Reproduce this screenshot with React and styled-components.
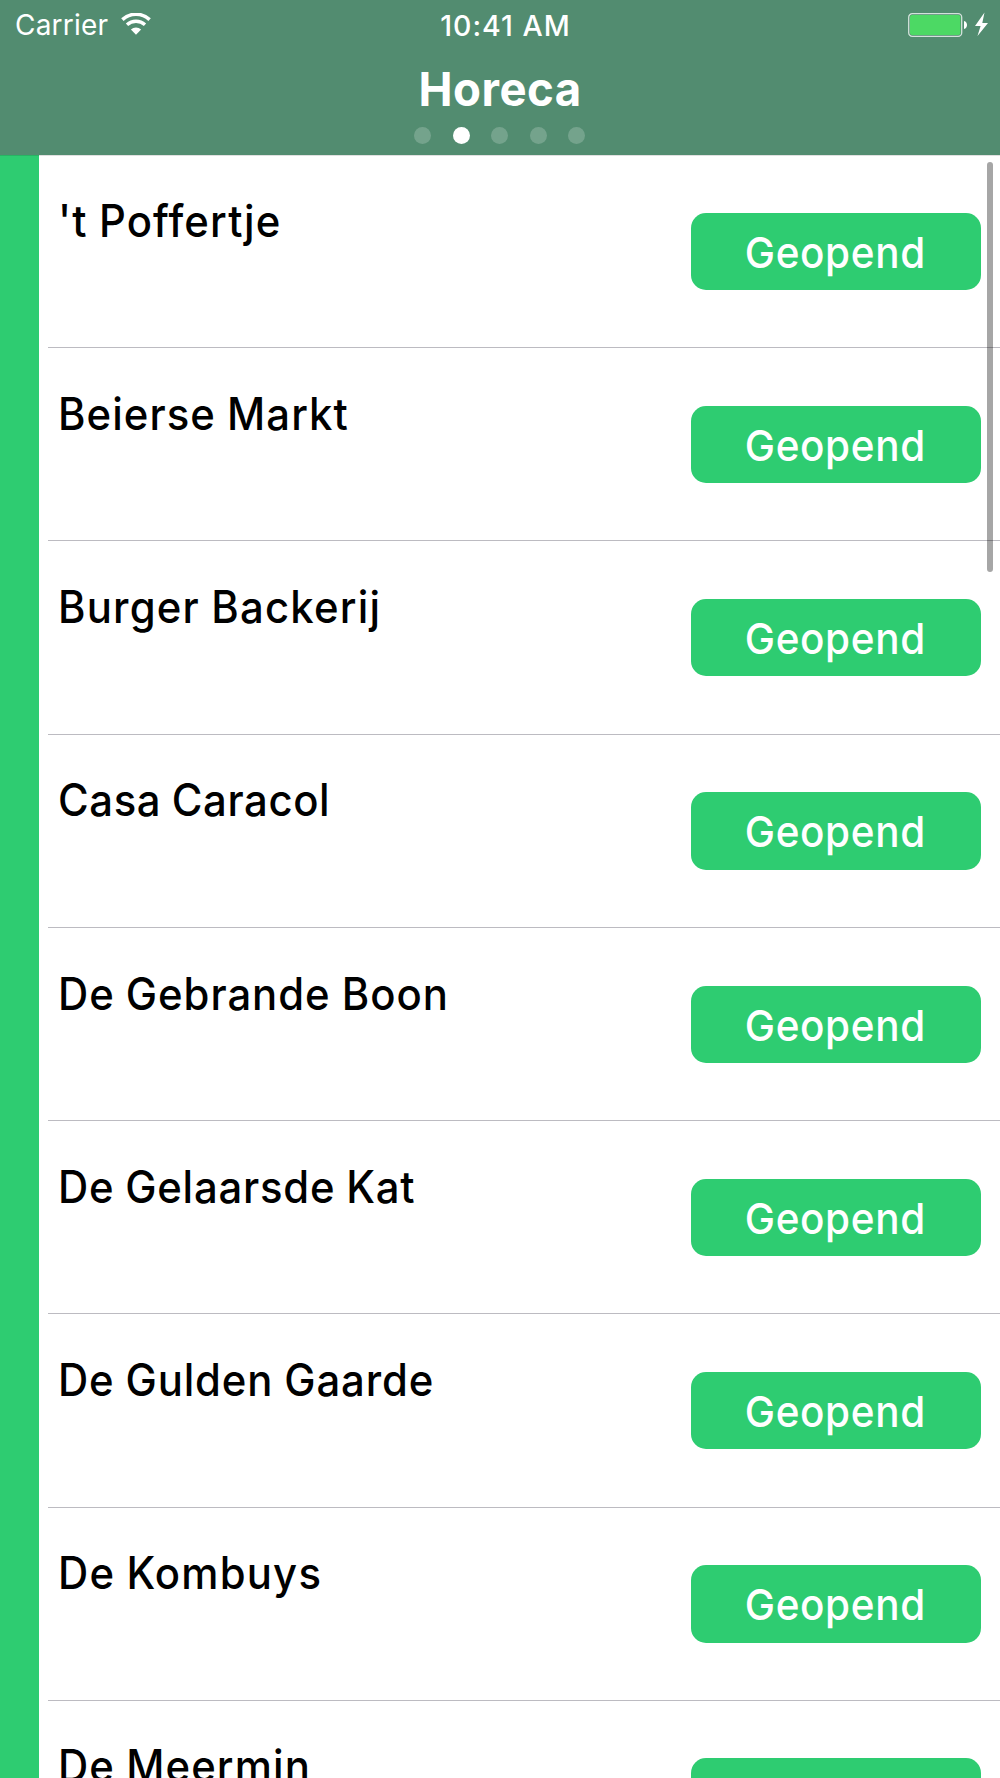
import React from 'react'
import styled, { createGlobalStyle } from 'styled-components'

const GlobalStyle = createGlobalStyle`
  body {
    margin: 0;
    background: #fff;
    font-family: Inter, "Liberation Sans", sans-serif;
    -webkit-font-smoothing: antialiased;
  }
`

const Screen = styled.div`
  position: relative;
  display: flex;
  flex-direction: column;
  height: 1778px;
  overflow: hidden;
`

const Header = styled.header`
  position: relative;
  flex: none;
  height: 155px;
  background: #528c70;
  box-shadow: 0 1px 0 rgba(0, 0, 0, .12);
  color: #fff;
  display: flex;
  flex-direction: column;
  align-items: center;
`

const StatusBar = styled.div`
  box-sizing: border-box;
  width: 100%;
  height: 48px;
  padding: 3px 12px 0 15px;
  display: grid;
  grid-template-columns: 1fr auto 1fr;
  align-items: center;
  font-size: 28px;
  line-height: 45px;
`

const Carrier = styled.div`
  display: flex;
  align-items: center;
  gap: 13px;
  letter-spacing: .2px;

  svg {
    margin-bottom: 3px;
  }
`

const Clock = styled.div`
  font-size: 28.5px;
  font-weight: 500;
  line-height: 44px;
  letter-spacing: 1px;
  padding-left: 8px;
`

const Power = styled.div`
  display: flex;
  justify-content: flex-end;

  svg {
    margin-bottom: 2px;
  }
`

const Title = styled.h1`
  margin: 16px 0 0;
  font-size: 47px;
  font-weight: 700;
  line-height: 50px;
  letter-spacing: .5px;
  transform: scaleX(.97);
`

const Dots = styled.div`
  display: flex;
  gap: 21.6px;
  margin: 13.2px .6px 0 0;
`

const Dot = styled.span`
  width: 17px;
  height: 17px;
  border-radius: 50%;
  background: ${({ $active }) => ($active ? '#fff' : 'rgba(255, 255, 255, .2)')};
`

const Body = styled.main`
  flex: 1;
  min-height: 0;
  display: flex;
`

const Stripe = styled.div`
  flex: none;
  width: 38.65px;
  background: #2ecc71;
`

const List = styled.ul`
  flex: 1;
  list-style: none;
  margin: 0;
  padding: 0 0 0 9.65px;
`

const Row = styled.li`
  box-sizing: border-box;
  height: 193.24px;
  padding: 0 19.3px 0 9.7px;
  border-bottom: 1px solid #bcbbc1;
  display: flex;
  justify-content: space-between;
`

const Name = styled.div`
  padding-top: 37.6px;
  font-size: 44.5px;
  font-weight: 500;
  line-height: 56px;
  letter-spacing: ${({ $spacing = 1 }) => $spacing}px;
  word-spacing: -1.2px;
  font-variant-ligatures: none;
  color: #000;
  white-space: nowrap;
  transform: scaleX(.94);
  transform-origin: left;
`

const Badge = styled.div`
  display: flex;
  justify-content: center;
  margin-top: 57.6px;
  width: 289.9px;
  height: 77.3px;
  border-radius: 15px;
  background: #2ecc71;
`

const BadgeLabel = styled.span`
  color: #fff;
  font-size: 43px;
  font-weight: 500;
  line-height: 78px;
  letter-spacing: .7px;
  transform: scaleX(.94);
`

const Scrollbar = styled.div`
  position: absolute;
  top: 162px;
  right: 7px;
  width: 6px;
  height: 410px;
  border-radius: 3px;
  background: rgba(0, 0, 0, .35);
`

const places = [
  { name: "'t Poffertje", spacing: 1.25 },
  { name: 'Beierse Markt', spacing: 1.15 },
  { name: 'Burger Backerij', spacing: 1.3 },
  { name: 'Casa Caracol', spacing: .65 },
  { name: 'De Gebrande Boon', spacing: 1.05 },
  { name: 'De Gelaarsde Kat', spacing: .85 },
  { name: 'De Gulden Gaarde', spacing: .95 },
  { name: 'De Kombuys', spacing: 1.3 },
  { name: 'De Meermin', spacing: 1.2 },
]

const WifiIcon = () => (
  <svg width="30" height="22" viewBox="0 0 30 22" fill="none">
    <path d="M1.4 6.6a20 20 0 0 1 27.2 0" stroke="#fff" strokeWidth="3.6" />
    <path d="M6 11.8a13.3 13.3 0 0 1 18 0" stroke="#fff" strokeWidth="3.4" />
    <path d="M9.9 16.4a7.6 7.6 0 0 1 10.2 0L15 21.8z" fill="#fff" />
  </svg>
)

const BatteryIcon = () => (
  <svg width="80" height="26" viewBox="0 0 80 26" fill="none">
    <rect x=".7" y="1.7" width="53" height="22.6" rx="3.6" stroke="#fff" strokeOpacity=".75" strokeWidth="1.3" />
    <rect x="2" y="3" width="50.4" height="20" rx="2" fill="#4cd964" />
    <path d="M56 9c4 .6 4 7.4 0 8z" fill="#fff" />
    <path d="M76.500 .5L67 14h5.600L69.500 24 80 11h-5.700z" fill="#fff" />
  </svg>
)

export default () => (
  <Screen>
    <GlobalStyle />
    <Header>
      <StatusBar>
        <Carrier>Carrier <WifiIcon /></Carrier>
        <Clock>10:41 AM</Clock>
        <Power><BatteryIcon /></Power>
      </StatusBar>
      <Title>Horeca</Title>
      <Dots>
        {[0, 1, 2, 3, 4].map(i => <Dot key={i} $active={i === 1} />)}
      </Dots>
    </Header>
    <Body>
      <Stripe />
      <List>
        {places.map(({ name, spacing }) => (
          <Row key={name}>
            <Name $spacing={spacing}>{name}</Name>
            <Badge><BadgeLabel>Geopend</BadgeLabel></Badge>
          </Row>
        ))}
      </List>
    </Body>
    <Scrollbar />
  </Screen>
)
